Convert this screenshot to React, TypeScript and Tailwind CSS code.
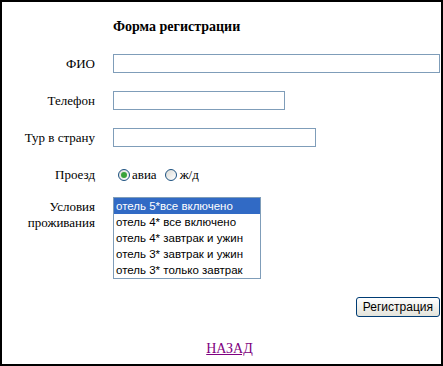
import React from 'react'

const serif = 'font-["Liberation_Serif","Times_New_Roman",serif]'
const sans = 'font-["Liberation_Sans",Arial,sans-serif]'

const options = [
  'отель 5*все включено',
  'отель 4* все включено',
  'отель 4* завтрак и ужин',
  'отель 3* завтрак и ужин',
  'отель 3* только завтрак',
]

function Radio({ checked }: { checked?: boolean }) {
  return (
    <span className="flex size-[12px] items-center justify-center rounded-full border border-[#1c5180] bg-gradient-to-br from-[#dcdcd7] to-white">
      {checked && <span className="size-[6px] rounded-full bg-[#3aa33a]" />}
    </span>
  )
}

function Field({ width }: { width: string }) {
  return <div className={`h-[19px] border border-[#7f9db9] bg-white ${width}`} />
}

export default function App() {
  return (
    <div className={`h-[366px] w-[443px] border-2 border-black bg-white text-[13px] text-black ${serif}`}>
      <div className="grid grid-cols-[93px_1fr] gap-x-[18px] pt-[16px]">
        <div />
        <h1 className="h-[18px] text-[14px] font-bold leading-[18px]">Форма регистрации</h1>

        <label className="mt-[18px] flex h-[19px] items-center justify-end">ФИО</label>
        <div className="mt-[18px] pr-[1px]">
          <Field width="w-[327px]" />
        </div>

        <label className="mt-[18px] flex h-[19px] items-center justify-end">Телефон</label>
        <div className="mt-[18px]">
          <Field width="w-[172px]" />
        </div>

        <label className="mt-[18px] flex h-[19px] items-center justify-end">Тур в страну</label>
        <div className="mt-[18px]">
          <Field width="w-[203px]" />
        </div>

        <label className="mt-[18px] flex h-[19px] items-center justify-end">Проезд</label>
        <div className="mt-[18px] flex h-[19px] items-center">
          <span className="ml-[5px] flex items-center gap-[2px]">
            <Radio checked />
            <span>авиа</span>
          </span>
          <span className="ml-[8px] flex items-center gap-[3px]">
            <Radio />
            <span>ж/д</span>
          </span>
        </div>

        <label className="mt-[13px] pt-[2px] text-right leading-[16px]">
          Условия
          <br />
          проживания
        </label>
        <div className="mt-[13px]">
          <div className={`w-[148px] border border-[#7f9db9] bg-white text-[11.5px] ${sans}`}>
            {options.map((o, i) => (
              <div
                key={o}
                className={`h-[16px] px-[2px] leading-[16px] whitespace-nowrap ${i === 0 ? 'bg-[#316ac5] text-white' : ''}`}
              >
                {o}
              </div>
            ))}
          </div>
        </div>
      </div>

      <div className="mt-[18px] flex justify-end pr-[1px]">
        <button
          className={`h-[20px] rounded-[3px] border border-[#003c74] bg-gradient-to-b from-white to-[#e3e3db] px-[6px] text-[12px] leading-[18px] ${sans}`}
        >
          Регистрация
        </button>
      </div>

      <div className="mt-[21px] flex justify-center pl-[16px]">
        <a href="#" className="text-[14px] text-[#800080] underline">
          НАЗАД
        </a>
      </div>
    </div>
  )
}
